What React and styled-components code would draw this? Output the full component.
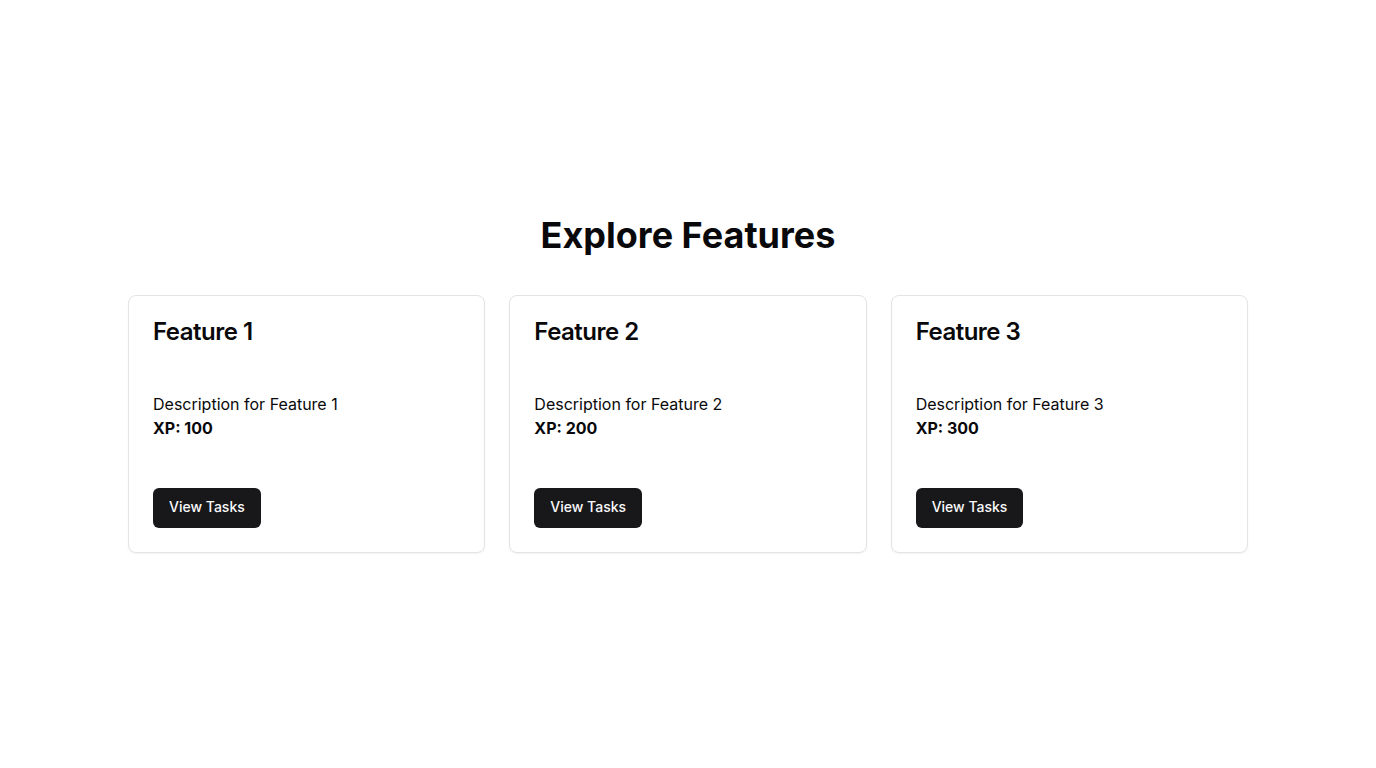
import styled, { createGlobalStyle } from "styled-components";

const GlobalStyle = createGlobalStyle`
  * {
    box-sizing: border-box;
  }
  body {
    margin: 0;
    background: #ffffff;
    color: #09090b;
    font-family: Inter, "Noto Sans", sans-serif;
  }
`;

const Page = styled.main`
  min-height: 100vh;
  display: flex;
  flex-direction: column;
  justify-content: center;
  align-items: center;
  padding: 0 16px;
`;

const Heading = styled.h1`
  margin: 0 0 40px;
  font-size: 36px;
  line-height: 40px;
  font-weight: 700;
  text-align: center;
`;

const Grid = styled.div`
  width: 100%;
  max-width: 1120px;
  display: grid;
  grid-template-columns: repeat(3, 1fr);
  gap: 24px;
`;

const Card = styled.div`
  display: flex;
  flex-direction: column;
  border: 1px solid #e4e4e7;
  border-radius: 8px;
  background: #ffffff;
  box-shadow: 0 1px 2px rgba(0, 0, 0, 0.05);
`;

const CardHeader = styled.div`
  padding: 24px 24px 0;
`;

const CardTitle = styled.h3`
  margin: 0;
  font-size: 24px;
  line-height: 24px;
  font-weight: 600;
  letter-spacing: -0.5px;
`;

const CardContent = styled.div`
  padding: 48px 24px 48px;
  font-size: 16px;
  line-height: 24px;
`;

const Text = styled.p`
  margin: 0;
  font-weight: ${(p) => (p.$bold ? 700 : 400)};
`;

const CardFooter = styled.div`
  display: flex;
  padding: 0 24px 24px;
`;

const Button = styled.button`
  display: inline-flex;
  align-items: center;
  justify-content: center;
  height: 40px;
  padding: 9px 16px 11px;
  border: none;
  border-radius: 6px;
  background: #18181b;
  color: #fafafa;
  font-family: inherit;
  font-size: 14px;
  line-height: 20px;
  font-weight: 500;
  cursor: pointer;
`;

const features = [
  { id: 1, xp: 100 },
  { id: 2, xp: 200 },
  { id: 3, xp: 300 },
];

export default function App() {
  return (
    <>
      <GlobalStyle />
      <Page>
        <Heading>Explore Features</Heading>
        <Grid>
          {features.map((f) => (
            <Card key={f.id}>
              <CardHeader>
                <CardTitle>Feature {f.id}</CardTitle>
              </CardHeader>
              <CardContent>
                <Text>Description for Feature {f.id}</Text>
                <Text $bold>XP: {f.xp}</Text>
              </CardContent>
              <CardFooter>
                <Button>View Tasks</Button>
              </CardFooter>
            </Card>
          ))}
        </Grid>
      </Page>
    </>
  );
}
